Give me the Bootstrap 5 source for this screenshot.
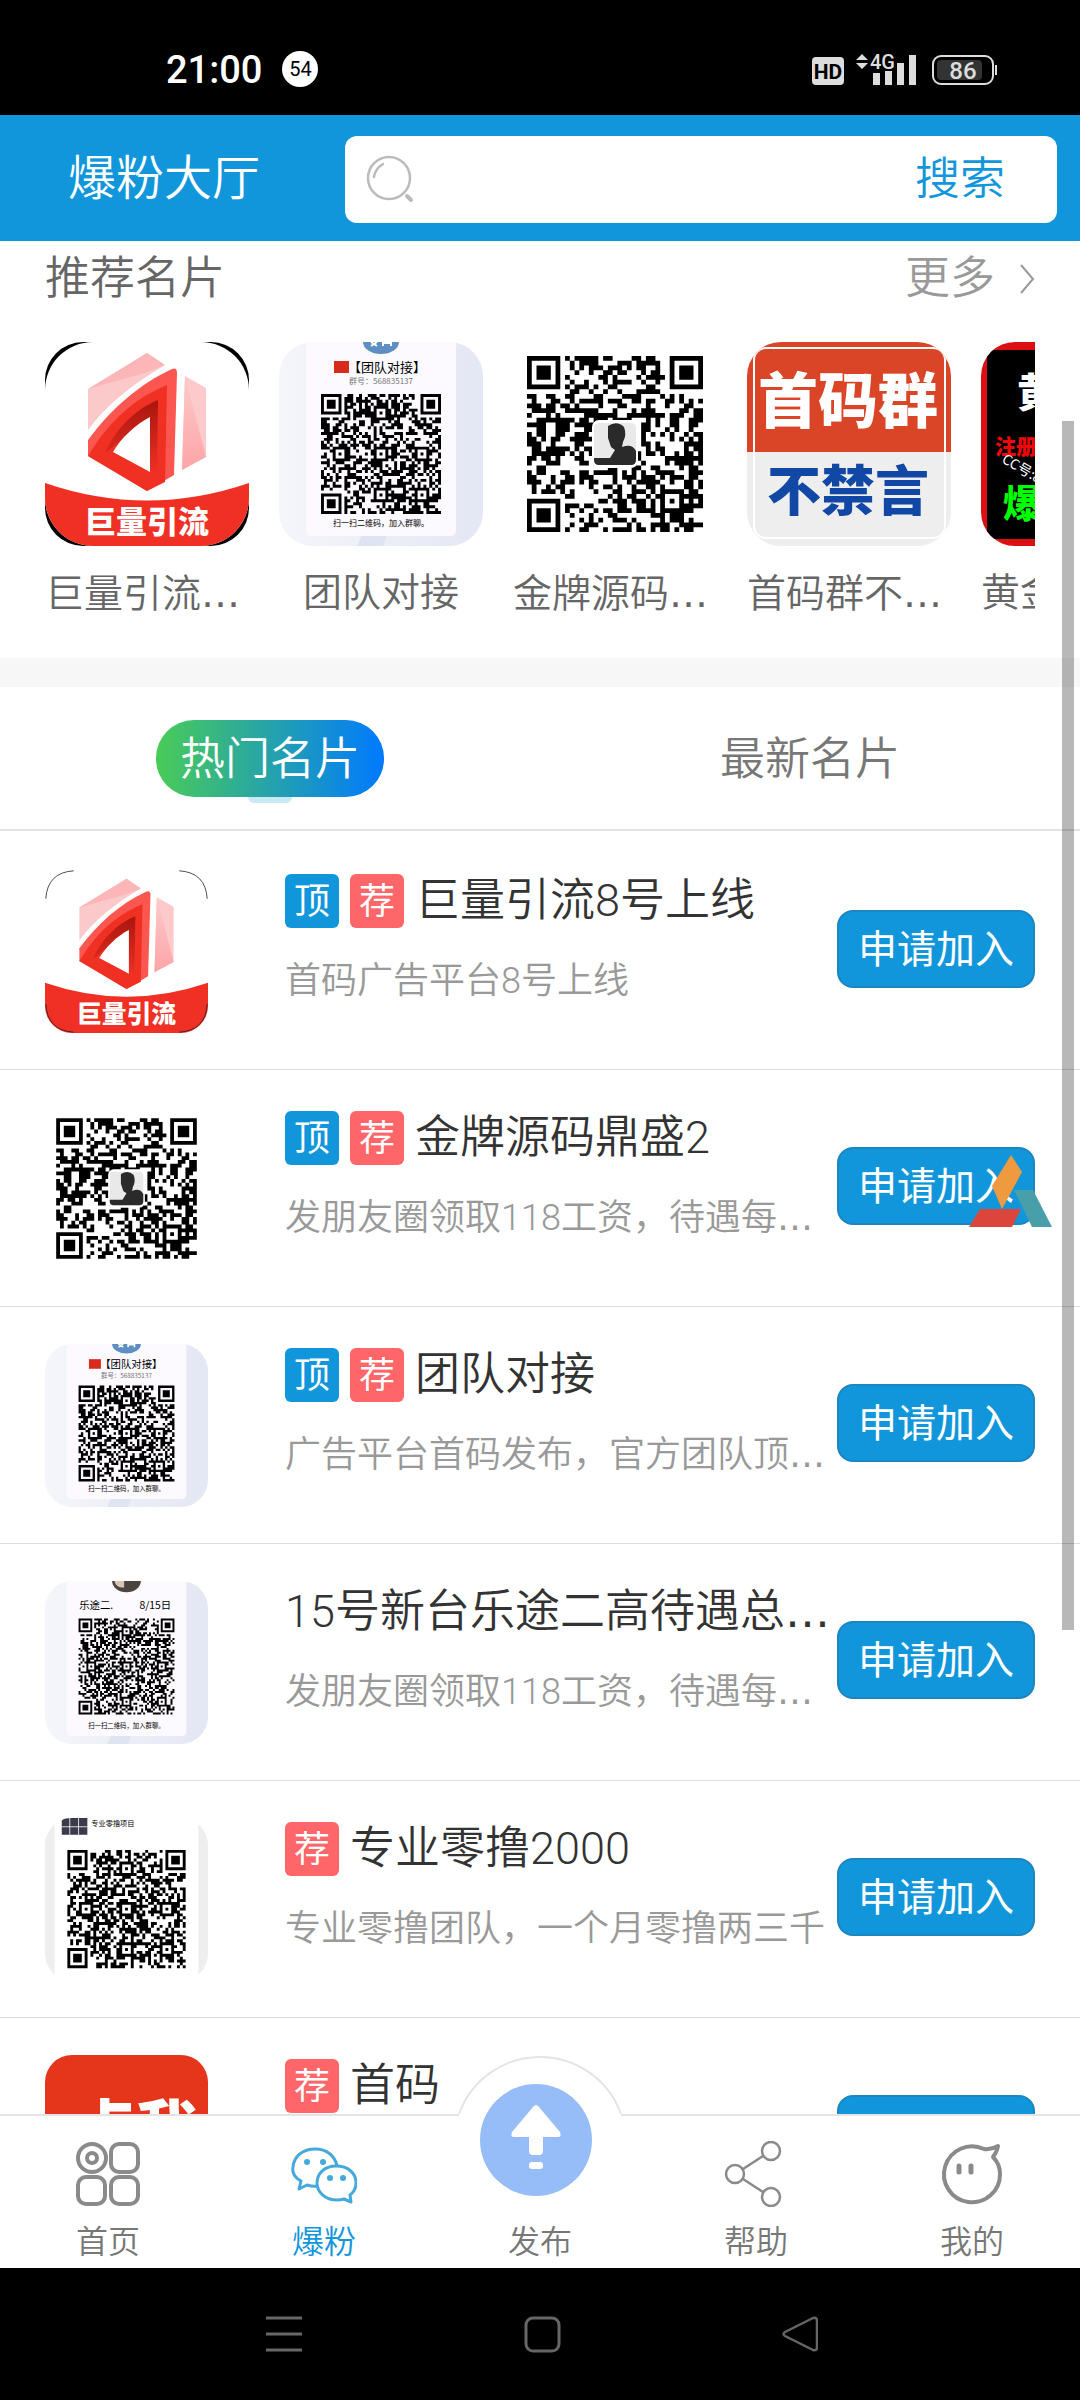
<!DOCTYPE html>
<html lang="zh-CN">
<head>
<meta charset="utf-8">
<meta name="viewport" content="width=device-width, initial-scale=1">
<title>爆粉大厅</title>
<link href="https://cdn.jsdelivr.net/npm/bootstrap@5.3.0/dist/css/bootstrap.min.css" rel="stylesheet">
<style>
  :root { --brand: #1296db; --ink: #333; --muted: #999; --soft: #666; --text-weight: 350; }
  body { font-family: Roboto, "Noto Sans CJK SC", sans-serif; font-weight: var(--text-weight); color: var(--ink); background: #fff; }
  a { color: inherit; text-decoration: none; }
  svg { display: block; flex: none; }
  .dots { font-family: "DejaVu Sans", sans-serif; font-weight: 400; }

  .status-bar { height: 115px; padding: 22px 83px 0 166px; background: #000; color: #fff; }
  .clock { font-size: 38px; line-height: 44px; padding-top: 2px; font-weight: 500; }
  .notice-count { width: 36px; height: 36px; margin-left: 20px; border-radius: 50%; background: #fff; color: #000; font-size: 20px; font-weight: 400; }

  .app-header { height: 126px; padding: 2px 23px 0 68px; background: var(--brand); }
  .app-title { width: 277px; flex: none; font-size: 48px; line-height: 60px; color: #fff; font-weight: var(--text-weight); }
  .search-box { height: 87px; padding: 0 52px 0 21px; border-radius: 12px; background: #fff; }
  .search-box .form-control { font-size: 40px; background: none; }
  .search-box .btn { padding: 2px 0 0; font-size: 45px; line-height: 60px; font-weight: var(--text-weight); color: var(--brand); }

  .feed { min-height: 0; }
  .section-head { padding: 8px 45px 0; font-size: 45px; line-height: 60px; color: var(--soft); }
  .section-head h2 { font-size: 45px; line-height: 60px; font-weight: var(--text-weight); }
  .more-link { color: var(--muted); gap: 25px; }
  .shelf { gap: 30px; margin: 33px 45px 0; padding-bottom: 34px; }
  .shelf-item { width: 204px; flex: none; }
  .shelf-item svg { width: 204px; height: 204px; }
  .shelf-label { margin-top: 18px; font-size: 39px; line-height: 59px; color: var(--soft); }
  .band { height: 29px; background: #f7f7f7; }

  .feed-tabs { height: 144px; margin-bottom: 2px; border-bottom: 2px solid #e3e3e3; }
  .feed-tabs .nav-link { position: relative; height: 77px; padding: 0 24px; font-size: 45px; line-height: 80px; font-weight: var(--text-weight); color: #777; border-radius: 38px; }
  .feed-tabs .nav-link.active { color: #fff; background: linear-gradient(90deg, #4acb57, #007aff); }
  .feed-tabs .nav-link.active::after { content: ""; position: absolute; left: 50%; bottom: -6px; width: 44px; height: 6px; margin-left: -22px; background: #c9e9f4; border-radius: 0 0 6px 6px; }

  .card-row { height: 237px; padding: 37px 45px 0; border-bottom: 1px solid #ddd; }
  .card-row > svg { width: 163px; height: 163px; margin-right: 77px; }
  .card-info { width: 540px; min-width: 0; }
  .card-name { font-size: 45px; line-height: 62px; color: #333; font-weight: var(--text-weight); gap: 11px; }
  .tag { width: 54px; height: 54px; flex: none; border-radius: 6px; font-size: 36px; line-height: 56px; font-weight: 400; text-align: center; color: #fff; }
  .tag-top { background: var(--brand); }
  .tag-rec { background: #ff6669; }
  .card-desc { margin-top: 22px; font-size: 36px; line-height: 54px; color: var(--muted); }
  .join { width: 198px; height: 78px; margin: 40px 0 0 12px; padding: 2px 0 0; flex: none; font-size: 39px; font-weight: 400; color: #fff; background: var(--brand); border: 2px solid #1b86c0; border-radius: 16px; }

  .scroll-thumb { position: absolute; right: 6px; top: 180px; width: 12px; height: 1209px; background: rgba(0, 0, 0, .28); }
  .float-logo { position: absolute; right: 22px; top: 914px; }

  .tab-bar { position: relative; height: 154px; background: #fff; border-top: 2px solid #e4e4e4; color: #777; }
  .tab-bar a { position: relative; flex: 1 1 0; padding-top: 25px; font-size: 32px; line-height: 48px; }
  .tab-bar svg { height: 66px; margin-bottom: 11px; }
  .tab-bar .current { color: var(--brand); }
  .tab-bar .hump { position: absolute; left: 50%; top: -62px; width: 172px; height: 150px; margin: 0 0 0 -86px; }
  .publish-label { margin-top: 77px; }
  .sys-bar { height: 132px; padding: 0 262px; background: #000; }
</style>
<script src="https://cdn.jsdelivr.net/npm/bootstrap@5.3.0/dist/js/bootstrap.bundle.min.js"></script>
</head>
<body class="vh-100 d-flex flex-column overflow-hidden">

<!-- shared artwork -->
<svg width="0" height="0" class="position-absolute" aria-hidden="true">
  <defs>
    <linearGradient id="gLight" x1="0" y1="0" x2="0" y2="1"><stop offset="0" stop-color="#fccaca"/><stop offset="1" stop-color="#fda5a7"/></linearGradient>
    <linearGradient id="gDark" x1="0" y1="0" x2="0" y2="1"><stop offset="0" stop-color="#a8160e"/><stop offset="1" stop-color="#ee3024"/></linearGradient>
    <linearGradient id="gPaper" x1="0" y1="0" x2="1" y2="0"><stop offset="0" stop-color="#f5f6fa"/><stop offset="1" stop-color="#e4e7f4"/></linearGradient>
    <clipPath id="tile"><rect width="204" height="204" rx="34"/></clipPath>
    <clipPath id="roundInner"><rect width="204" height="204" rx="48"/></clipPath>
    <symbol id="artFlow" viewBox="0 0 204 204">
      <g clip-path="url(#tile)">
        <path d="M0 0h204v204H0z" fill="#fff"/>
        <path d="M43 47 102 11l18 12C88 42 62 62 43 88z" fill="#fcc9ca"/>
        <path d="M43 47 102 11l18 12-20 8z" fill="#fdb6b8"/>
        <path d="m140 34 21 12v69l-24 13z" fill="#fdc9cb"/>
        <path d="m140 34 21 81-24 13z" fill="url(#gLight)"/>
        <path d="M43 98C65 68 94 42 127 27q5-2 5 4l-3 102-27 16-59-35z" fill="#fb5750"/>
        <path d="M43 114C61 84 85 58 122 43l-2 97-18 9z" fill="#f03023"/>
        <path d="M60 111C71 86 91 67 113 58l-1 72-8-3V77z" fill="url(#gDark)"/>
        <path d="M68 110C76 96 91 82 105 75v55z" fill="#fff"/>
        <path d="M0 141q102 35 204 0v63H0z" fill="#f03024"/>
        <text x="102" y="191" text-anchor="middle" font-size="31" font-weight="900" fill="#fff" font-family="Noto Sans CJK SC">巨量引流</text>
      </g>
    </symbol>
  </defs>
</svg>

<div class="status-bar d-flex align-items-center flex-shrink-0">
  <span class="clock">21:00</span>
  <span class="notice-count d-flex align-items-center justify-content-center">54</span>
  <svg class="ms-auto" width="186" height="36" viewBox="0 0 186 36" fill="#ddd" font-family="Roboto">
    <rect x="1" y="6" width="32" height="28" rx="4"/>
    <text x="17" y="28" font-size="21" font-weight="700" fill="#000" text-anchor="middle">HD</text>
    <path d="M45 9l6-6 6 6zM45 12l6 6 6-6z"/>
    <text x="59" y="18" font-size="20" font-weight="500">4G</text>
    <path d="M62 22h7v12h-7zM74 20h7v14h-7zM86 12h7v22h-7zM98 4h7v30h-7z"/>
    <rect x="122" y="5" width="60" height="28" rx="8" fill="none" stroke="#ddd" stroke-width="2"/>
    <rect x="126" y="9" width="45" height="20" rx="4" fill="#333"/>
    <path d="M184 14h2v10h-2z"/>
    <text x="152" y="28" font-size="24" font-weight="500" text-anchor="middle">86</text>
  </svg>
</div>

<header class="app-header d-flex align-items-center flex-shrink-0">
  <h1 class="app-title m-0">爆粉大厅</h1>
  <form class="search-box d-flex align-items-center flex-fill">
    <svg width="48" height="48" viewBox="0 0 48 48" fill="none" stroke="#bbb" stroke-width="2.5" stroke-linecap="round"><circle cx="23" cy="23" r="21"/><path d="M8 22q1-8 9-13"/><path d="M41 41l4 4" stroke-width="4"/></svg>
    <input class="form-control border-0 shadow-none" type="search" aria-label="搜索名片">
    <button class="btn border-0 text-nowrap" type="button">搜索</button>
  </form>
</header>

<main class="feed position-relative flex-fill overflow-hidden">
  <div class="section-head d-flex justify-content-between">
    <h2 class="m-0">推荐名片</h2>
    <a href="#" class="more-link d-flex align-items-center">更多<svg width="15" height="30" viewBox="0 0 15 30" fill="none" stroke="#999" stroke-width="2"><path d="M1 1l12 14L1 29"/></svg></a>
  </div>
  <div class="shelf d-flex overflow-hidden">
    <a href="#" class="shelf-item"><svg viewBox="0 0 204 204"><rect width="204" height="204" rx="38" fill="#000"/><g clip-path="url(#roundInner)"><use href="#artFlow"/></g></svg><div class="shelf-label text-nowrap">巨量引流<span class="dots">…</span></div></a>
    <a href="#" class="shelf-item"><svg viewBox="0 0 204 204" data-art="team"></svg><div class="shelf-label text-nowrap text-center">团队对接</div></a>
    <a href="#" class="shelf-item"><svg viewBox="0 0 204 204" data-art="gold"></svg><div class="shelf-label text-nowrap">金牌源码<span class="dots">…</span></div></a>
    <a href="#" class="shelf-item"><svg viewBox="0 0 204 204" font-family="Noto Sans CJK SC" font-weight="900" text-anchor="middle"><g clip-path="url(#tile)"><path d="M0 0h204v110H0z" fill="#d94526"/><path d="M0 110h204v94H0z" fill="#eee"/><rect x="7" y="6" width="191" height="190" rx="12" fill="none" stroke="#fff" stroke-width="2"/><text x="101" y="81" font-size="60" fill="#fff">首码群</text><text x="101" y="169" font-size="54" fill="#1148a5">不禁言</text></g></svg><div class="shelf-label text-nowrap">首码群不<span class="dots">…</span></div></a>
    <a href="#" class="shelf-item"><svg viewBox="0 0 204 204" font-family="Noto Sans CJK SC" font-weight="900"><g clip-path="url(#tile)"><path d="M0 0h204v204H0z" fill="#da1013"/><path d="M6 8h192v189H6z"/><text x="36" y="65" font-size="40" fill="#fff">黄金</text><text x="14" y="112" font-size="21" fill="#f00808">注册送</text><text x="20" y="120" font-size="14" font-weight="400" fill="#fff" transform="rotate(30 20 120)">CC号:88</text><text x="22" y="175" font-size="38" fill="#0f0">爆粉</text></g></svg><div class="shelf-label text-nowrap">黄金源码</div></a>
  </div>
  <div class="band"></div>

  <nav class="feed-tabs nav row g-0 align-items-center">
    <div class="col-6 d-flex justify-content-center"><a href="#" class="nav-link active" aria-current="page">热门名片</a></div>
    <div class="col-6 d-flex justify-content-center"><a href="#" class="nav-link">最新名片</a></div>
  </nav>

  <article class="card-row d-flex">
    <svg viewBox="0 0 204 204"><use href="#artFlow"/><path d="M1 36Q3 3 36 1M168 1q33 2 35 35M1 168q2 33 35 35M168 203q33-2 35-35" fill="none" stroke="#222" stroke-width="1"/></svg>
    <div class="card-info"><h3 class="card-name d-flex align-items-center m-0 text-nowrap"><span class="tag tag-top">顶</span><span class="tag tag-rec">荐</span><span>巨量引流8号上线</span></h3><p class="card-desc mb-0 text-nowrap">首码广告平台8号上线</p></div>
    <button class="btn join" type="button">申请加入</button>
  </article>
  <article class="card-row d-flex">
    <svg viewBox="0 0 204 204" data-art="gold"></svg>
    <div class="card-info"><h3 class="card-name d-flex align-items-center m-0 text-nowrap"><span class="tag tag-top">顶</span><span class="tag tag-rec">荐</span><span>金牌源码鼎盛2</span></h3><p class="card-desc mb-0 text-nowrap">发朋友圈领取118工资，待遇每<span class="dots">…</span></p></div>
    <button class="btn join" type="button">申请加入</button>
  </article>
  <article class="card-row d-flex">
    <svg viewBox="0 0 204 204" data-art="team"></svg>
    <div class="card-info"><h3 class="card-name d-flex align-items-center m-0 text-nowrap"><span class="tag tag-top">顶</span><span class="tag tag-rec">荐</span><span>团队对接</span></h3><p class="card-desc mb-0 text-nowrap">广告平台首码发布，官方团队顶<span class="dots">…</span></p></div>
    <button class="btn join" type="button">申请加入</button>
  </article>
  <article class="card-row d-flex">
    <svg viewBox="0 0 204 204" data-art="letu"></svg>
    <div class="card-info"><h3 class="card-name d-flex align-items-center m-0 text-nowrap"><span>15号新台乐途二高待遇总<span class="dots">…</span></span></h3><p class="card-desc mb-0 text-nowrap">发朋友圈领取118工资，待遇每<span class="dots">…</span></p></div>
    <button class="btn join" type="button">申请加入</button>
  </article>
  <article class="card-row d-flex">
    <svg viewBox="0 0 204 204" data-art="pro"></svg>
    <div class="card-info"><h3 class="card-name d-flex align-items-center m-0 text-nowrap"><span class="tag tag-rec">荐</span><span>专业零撸2000</span></h3><p class="card-desc mb-0 text-nowrap">专业零撸团队，一个月零撸两三千</p></div>
    <button class="btn join" type="button">申请加入</button>
  </article>
  <article class="card-row d-flex">
    <svg viewBox="0 0 204 204"><rect width="204" height="204" rx="34" fill="#e5351b"/><text x="114" y="122" font-size="78" font-weight="900" font-family="Noto Sans CJK SC" fill="#fff" text-anchor="middle">点我</text></svg>
    <div class="card-info"><h3 class="card-name d-flex align-items-center m-0 text-nowrap"><span class="tag tag-rec">荐</span><span>首码</span></h3></div>
    <button class="btn join" type="button" aria-label="申请加入"></button>
  </article>

  <svg class="float-logo" width="89" height="73" viewBox="0 0 89 73"><path d="M42 0l11 17-20 37-10-23z" fill="#ef9a3e"/><path d="M11 54h41l-9 18H0z" fill="#dc453b"/><path d="M45 35h19l19 37H63z" fill="#489fa9"/></svg>
  <div class="scroll-thumb"></div>
</main>

<nav class="tab-bar d-flex flex-shrink-0">
  <a href="#" class="d-flex flex-column align-items-center"><svg width="66" viewBox="0 0 66 66" fill="none" stroke="#8a8a8a" stroke-width="4"><circle cx="17" cy="17" r="14"/><circle cx="17" cy="17" r="5"/><rect x="36" y="3" width="27" height="28" rx="8"/><rect x="3" y="36" width="27" height="27" rx="8"/><rect x="36" y="36" width="27" height="27" rx="8"/></svg>首页</a>
  <a href="#" class="current d-flex flex-column align-items-center"><svg width="66" viewBox="0 0 66 66" fill="none" stroke="#46a9db" stroke-width="3" stroke-linejoin="round"><path d="M27 45q-5 1-11-1l-8 4 2-8C3 36 1 31 2 26 3 15 12 8 24 8c12 0 20 7 22 17"/><path d="M59 54c4-3 6-8 6-12 0-10-8-17-20-17s-19 8-19 17 8 17 20 17q4 0 7-1l7 3z"/><g fill="#46a9db" stroke="none"><circle cx="16" cy="21" r="3"/><circle cx="32" cy="21" r="3"/><circle cx="39" cy="37" r="3"/><circle cx="52" cy="37" r="3"/></g></svg>爆粉</a>
  <a href="#" class="d-flex flex-column align-items-center"><svg class="hump" viewBox="0 0 172 150"><path d="M5 60a86 86 0 0 1 162 0v90H5z" fill="#fff"/><path d="M5 60a86 86 0 0 1 162 0" fill="none" stroke="#e4e4e4" stroke-width="2"/><circle cx="82" cy="86" r="56" fill="#96bdf8"/><path d="M79 53q3-4 6 0l21 25q2 5-2 5H89v14q0 4-4 4h-6q-4 0-4-4V83H60q-4 0-2-5z" fill="#fff"/><rect x="75" y="108" width="14" height="7" rx="3" fill="#fff"/></svg><span class="publish-label">发布</span></a>
  <a href="#" class="d-flex flex-column align-items-center"><svg width="66" viewBox="0 0 66 66" fill="none" stroke="#8a8a8a" stroke-width="2.5"><circle cx="12" cy="33" r="9"/><circle cx="48" cy="10" r="9"/><circle cx="48" cy="56" r="9"/><path d="M20 28l20-13M20 38l20 13"/></svg>帮助</a>
  <a href="#" class="d-flex flex-column align-items-center"><svg width="66" viewBox="0 0 66 66" fill="none" stroke="#8a8a8a" stroke-width="4" stroke-linejoin="round"><path d="M45 8q7 1 14-3-1 6-5 11c4 4 7 10 7 17a28 28 0 1 1-16-25z"/><path d="M20 25v6M32 25v6" stroke-width="5" stroke-linecap="round"/></svg>我的</a>
</nav>

<div class="sys-bar d-flex align-items-center justify-content-between flex-shrink-0">
  <svg width="44" height="40" viewBox="0 0 44 40" stroke="#666" stroke-width="3"><path d="M4 4h36M4 20h36M4 36h36"/></svg>
  <svg width="40" height="40" viewBox="0 0 40 40" fill="none" stroke="#666" stroke-width="3"><rect x="4" y="4" width="33" height="33" rx="7"/></svg>
  <svg width="40" height="40" viewBox="0 0 40 40" fill="none" stroke="#666" stroke-width="2.5" stroke-linejoin="round"><path d="M7 18 35 4q4-1 4 3v26q0 4-4 3L7 22q-3-2 0-4z"/></svg>
</div>

<script>
  // Path data of a QR-like code of n modules, s units wide, at (x, y)
  function qrPath(n, x, y, s, seed, marks) {
    var m = s / n, d = '', i, j;
    function finder(a, b) { var r = Math.max(Math.abs(a - 3), Math.abs(b - 3)); return r === 3 || r < 2; }
    for (j = 0; j < n; j++) for (i = 0; i < n; i++) {
      seed = (seed * 1103515245 + 12345) % 2147483648;
      var on = (seed >> 12) % 100 < 52;
      var left = i < 8, right = i > n - 9, top = j < 8, bottom = j > n - 9;
      if ((left || right) && top || left && bottom) {
        var a = right ? i - n + 7 : i, b = bottom ? j - n + 7 : j;
        on = a >= 0 && a < 7 && b >= 0 && b < 7 && finder(a, b);
      } else marks.forEach(function (c) {
        var r = Math.max(Math.abs(i - c[0]), Math.abs(j - c[1]));
        if (r < 3) on = r !== 1;
      });
      if (on) d += 'M' + (x + i * m).toFixed(2) + ' ' + (y + j * m).toFixed(2) + 'h' + m.toFixed(2) + 'v' + m.toFixed(2) + 'h-' + m.toFixed(2) + 'z';
    }
    return '<path d="' + d + '" fill="#000"/>';
  }
  function grid(n) { var c = (n - 1) / 2, e = n - 7; return [[c, 6], [6, c], [c, c], [e, c], [c, e], [e, e]]; }
  var cjk = ' font-family="Noto Sans CJK SC" font-weight="400" text-anchor="middle"';
  var paper = '<rect width="204" height="204" rx="34" fill="url(#gPaper)"/><path d="M78 204l10-22h24l-8 22z" fill="#dfe4f2"/><path d="M27 0h150v188q0 6-6 6H33q-6 0-6-6z" fill="#fcf9ff"/>';
  var foot = '<text x="102" y="184" font-size="8"' + cjk + '>扫一扫二维码，加入群聊。</text>';
  var art = {
    team: paper + '<path d="M84 0a18 12 0 0 0 36 0z" fill="#5d8fc2"/><path d="M92 0l6 4M98 0l-6 4M104 4V1h8v3" fill="none" stroke="#fff" stroke-width="2"/><rect x="55" y="19" width="15" height="12" fill="#d92b1c"/><text x="108" y="30" font-size="13"' + cjk + '>【团队对接】</text><text x="102" y="42" font-size="8" fill="#777"' + cjk + '>群号：568835137</text>' + qrPath(41, 42, 52, 120, 7, grid(41)) + foot,
    gold: '<rect width="204" height="204" fill="#fff"/>' + qrPath(37, 14, 14, 176, 21, [[30, 30]]) + '<rect x="79" y="78" width="46" height="48" rx="7" fill="#fff"/><rect x="81" y="81" width="42" height="42" rx="5" fill="#e9e9e9"/><path d="M81 116h16l5-8-4-3-3-9 0-12q9-6 16 1 3 8-1 15l-1 5q10-4 14 4v9q0 5-5 5H86q-5 0-5-5z" fill="#2a2a2a"/>',
    letu: paper + '<path d="M84 0a18 14 0 0 0 36 0z" fill="#4b4440"/><path d="M87 0a10 9 0 0 0 12 8V0z" fill="#d8c7b0"/><text x="64" y="35" font-size="13"' + cjk + '>乐途二.</text><text x="138" y="35" font-size="13"' + cjk + '>8/15日</text>' + qrPath(49, 42, 47, 120, 35, grid(49)) + foot,
    pro: '<rect width="204" height="204" rx="34" fill="#eee"/><path d="M12 0h180v204H12z" fill="#fff"/><path d="M21 3q4-3 12-3h20v21H21z" fill="#3b3a4c"/><path d="M31 0v21M42 0v21M21 11h32" stroke="#fff"/><text x="85" y="10" font-size="9"' + cjk + '>专业零撸项目</text>' + qrPath(41, 28, 40, 148, 77, grid(41))
  };
  document.querySelectorAll('[data-art]').forEach(function (el) { el.innerHTML = art[el.dataset.art]; });
</script>
</body>
</html>
